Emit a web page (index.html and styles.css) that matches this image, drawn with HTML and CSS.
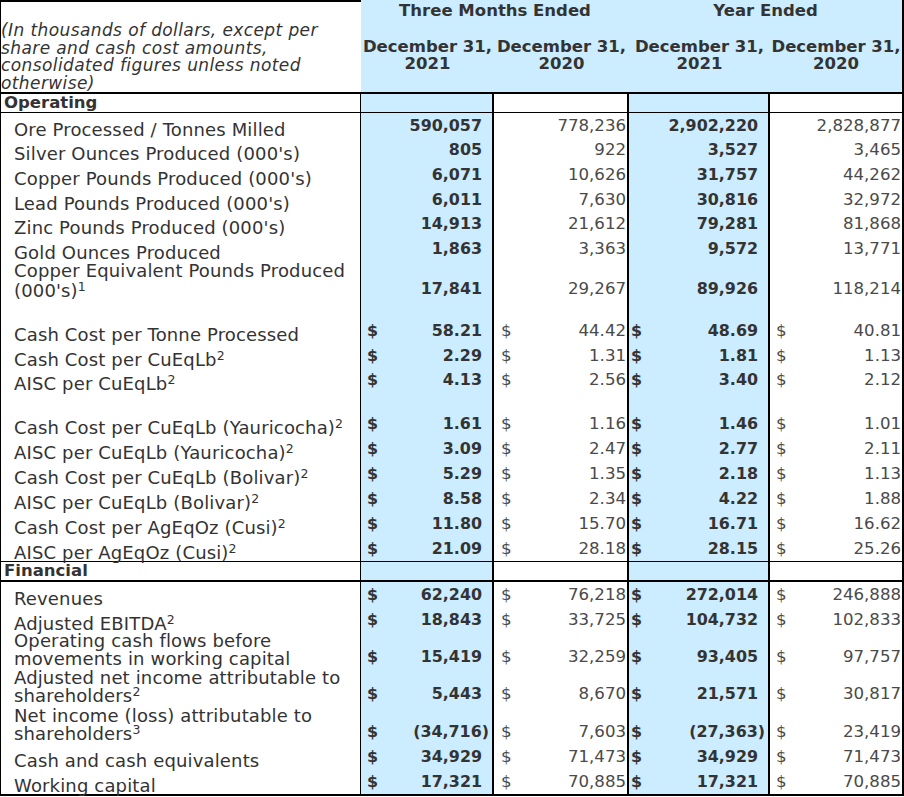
FILE: index.html
```html
<!DOCTYPE html>
<html lang="en">
<head>
<meta charset="utf-8">
<title>Operating and Financial Highlights</title>
<link rel="stylesheet" href="styles.css">
</head>
<body>
<table class="fin">
  <colgroup>
    <col class="c0"><col class="c1"><col class="c2"><col class="c3"><col class="c4">
  </colgroup>
  <thead>
    <tr class="h1">
      <th class="note" rowspan="2">(In thousands of dollars, except per<br>share and cash cost amounts,<br>consolidated figures unless noted<br>otherwise)</th>
      <th class="period" colspan="2">Three Months Ended</th>
      <th class="period last" colspan="2">Year Ended</th>
    </tr>
    <tr class="h2">
      <th class="date">December 31,<br>2021</th>
      <th class="date">December 31,<br>2020</th>
      <th class="date">December 31,<br>2021</th>
      <th class="date last">December 31,<br>2020</th>
    </tr>
  </thead>
  <tbody>
    <tr class="sec op">
      <td class="lbl sechd">Operating</td>
      <td class="v b q1"></td><td class="v w q2"></td><td class="v b q3"></td><td class="v w q4"></td>
    </tr>
    <tr class="r">
      <td class="lbl">Ore Processed / Tonnes Milled</td>
      <td class="v b q1"><div class="amt"><span class="n">590,057</span></div></td>
      <td class="v w q2"><div class="amt"><span class="n">778,236</span></div></td>
      <td class="v b q3"><div class="amt"><span class="n">2,902,220</span></div></td>
      <td class="v w q4"><div class="amt"><span class="n">2,828,877</span></div></td>
    </tr>
    <tr class="r">
      <td class="lbl">Silver Ounces Produced (000's)</td>
      <td class="v b q1"><div class="amt"><span class="n">805</span></div></td>
      <td class="v w q2"><div class="amt"><span class="n">922</span></div></td>
      <td class="v b q3"><div class="amt"><span class="n">3,527</span></div></td>
      <td class="v w q4"><div class="amt"><span class="n">3,465</span></div></td>
    </tr>
    <tr class="r">
      <td class="lbl">Copper Pounds Produced (000's)</td>
      <td class="v b q1"><div class="amt"><span class="n">6,071</span></div></td>
      <td class="v w q2"><div class="amt"><span class="n">10,626</span></div></td>
      <td class="v b q3"><div class="amt"><span class="n">31,757</span></div></td>
      <td class="v w q4"><div class="amt"><span class="n">44,262</span></div></td>
    </tr>
    <tr class="r">
      <td class="lbl">Lead Pounds Produced (000's)</td>
      <td class="v b q1"><div class="amt"><span class="n">6,011</span></div></td>
      <td class="v w q2"><div class="amt"><span class="n">7,630</span></div></td>
      <td class="v b q3"><div class="amt"><span class="n">30,816</span></div></td>
      <td class="v w q4"><div class="amt"><span class="n">32,972</span></div></td>
    </tr>
    <tr class="r">
      <td class="lbl">Zinc Pounds Produced (000's)</td>
      <td class="v b q1"><div class="amt"><span class="n">14,913</span></div></td>
      <td class="v w q2"><div class="amt"><span class="n">21,612</span></div></td>
      <td class="v b q3"><div class="amt"><span class="n">79,281</span></div></td>
      <td class="v w q4"><div class="amt"><span class="n">81,868</span></div></td>
    </tr>
    <tr class="r">
      <td class="lbl">Gold Ounces Produced</td>
      <td class="v b q1"><div class="amt"><span class="n">1,863</span></div></td>
      <td class="v w q2"><div class="amt"><span class="n">3,363</span></div></td>
      <td class="v b q3"><div class="amt"><span class="n">9,572</span></div></td>
      <td class="v w q4"><div class="amt"><span class="n">13,771</span></div></td>
    </tr>
    <tr class="r-cep">
      <td class="lbl lbl-cep">Copper Equivalent Pounds Produced<br>(000's)<sup>1</sup></td>
      <td class="v b q1"><div class="amt"><span class="n">17,841</span></div></td>
      <td class="v w q2"><div class="amt"><span class="n">29,267</span></div></td>
      <td class="v b q3"><div class="amt"><span class="n">89,926</span></div></td>
      <td class="v w q4"><div class="amt"><span class="n">118,214</span></div></td>
    </tr>
    <tr class="gap-a">
      <td class="lbl"></td>
      <td class="v b q1"></td><td class="v w q2"></td><td class="v b q3"></td><td class="v w q4"></td>
    </tr>
    <tr class="r">
      <td class="lbl">Cash Cost per Tonne Processed</td>
      <td class="v b q1"><div class="amt"><span class="cur">$</span><span class="n">58.21</span></div></td>
      <td class="v w q2"><div class="amt"><span class="cur">$</span><span class="n">44.42</span></div></td>
      <td class="v b q3"><div class="amt"><span class="cur">$</span><span class="n">48.69</span></div></td>
      <td class="v w q4"><div class="amt"><span class="cur">$</span><span class="n">40.81</span></div></td>
    </tr>
    <tr class="r">
      <td class="lbl">Cash Cost per CuEqLb<sup>2</sup></td>
      <td class="v b q1"><div class="amt"><span class="cur">$</span><span class="n">2.29</span></div></td>
      <td class="v w q2"><div class="amt"><span class="cur">$</span><span class="n">1.31</span></div></td>
      <td class="v b q3"><div class="amt"><span class="cur">$</span><span class="n">1.81</span></div></td>
      <td class="v w q4"><div class="amt"><span class="cur">$</span><span class="n">1.13</span></div></td>
    </tr>
    <tr class="r">
      <td class="lbl">AISC per CuEqLb<sup>2</sup></td>
      <td class="v b q1"><div class="amt"><span class="cur">$</span><span class="n">4.13</span></div></td>
      <td class="v w q2"><div class="amt"><span class="cur">$</span><span class="n">2.56</span></div></td>
      <td class="v b q3"><div class="amt"><span class="cur">$</span><span class="n">3.40</span></div></td>
      <td class="v w q4"><div class="amt"><span class="cur">$</span><span class="n">2.12</span></div></td>
    </tr>
    <tr class="gap-b">
      <td class="lbl"></td>
      <td class="v b q1"></td><td class="v w q2"></td><td class="v b q3"></td><td class="v w q4"></td>
    </tr>
    <tr class="r25">
      <td class="lbl">Cash Cost per CuEqLb (Yauricocha)<sup>2</sup></td>
      <td class="v b q1"><div class="amt"><span class="cur">$</span><span class="n">1.61</span></div></td>
      <td class="v w q2"><div class="amt"><span class="cur">$</span><span class="n">1.16</span></div></td>
      <td class="v b q3"><div class="amt"><span class="cur">$</span><span class="n">1.46</span></div></td>
      <td class="v w q4"><div class="amt"><span class="cur">$</span><span class="n">1.01</span></div></td>
    </tr>
    <tr class="r25">
      <td class="lbl">AISC per CuEqLb (Yauricocha)<sup>2</sup></td>
      <td class="v b q1"><div class="amt"><span class="cur">$</span><span class="n">3.09</span></div></td>
      <td class="v w q2"><div class="amt"><span class="cur">$</span><span class="n">2.47</span></div></td>
      <td class="v b q3"><div class="amt"><span class="cur">$</span><span class="n">2.77</span></div></td>
      <td class="v w q4"><div class="amt"><span class="cur">$</span><span class="n">2.11</span></div></td>
    </tr>
    <tr class="r25">
      <td class="lbl">Cash Cost per CuEqLb (Bolivar)<sup>2</sup></td>
      <td class="v b q1"><div class="amt"><span class="cur">$</span><span class="n">5.29</span></div></td>
      <td class="v w q2"><div class="amt"><span class="cur">$</span><span class="n">1.35</span></div></td>
      <td class="v b q3"><div class="amt"><span class="cur">$</span><span class="n">2.18</span></div></td>
      <td class="v w q4"><div class="amt"><span class="cur">$</span><span class="n">1.13</span></div></td>
    </tr>
    <tr class="r25">
      <td class="lbl">AISC per CuEqLb (Bolivar)<sup>2</sup></td>
      <td class="v b q1"><div class="amt"><span class="cur">$</span><span class="n">8.58</span></div></td>
      <td class="v w q2"><div class="amt"><span class="cur">$</span><span class="n">2.34</span></div></td>
      <td class="v b q3"><div class="amt"><span class="cur">$</span><span class="n">4.22</span></div></td>
      <td class="v w q4"><div class="amt"><span class="cur">$</span><span class="n">1.88</span></div></td>
    </tr>
    <tr class="r25">
      <td class="lbl">Cash Cost per AgEqOz (Cusi)<sup>2</sup></td>
      <td class="v b q1"><div class="amt"><span class="cur">$</span><span class="n">11.80</span></div></td>
      <td class="v w q2"><div class="amt"><span class="cur">$</span><span class="n">15.70</span></div></td>
      <td class="v b q3"><div class="amt"><span class="cur">$</span><span class="n">16.71</span></div></td>
      <td class="v w q4"><div class="amt"><span class="cur">$</span><span class="n">16.62</span></div></td>
    </tr>
    <tr class="r25">
      <td class="lbl">AISC per AgEqOz (Cusi)<sup>2</sup></td>
      <td class="v b q1"><div class="amt"><span class="cur">$</span><span class="n">21.09</span></div></td>
      <td class="v w q2"><div class="amt"><span class="cur">$</span><span class="n">28.18</span></div></td>
      <td class="v b q3"><div class="amt"><span class="cur">$</span><span class="n">28.15</span></div></td>
      <td class="v w q4"><div class="amt"><span class="cur">$</span><span class="n">25.26</span></div></td>
    </tr>
    <tr class="sec finhd">
      <td class="lbl sechd">Financial</td>
      <td class="v b q1"></td><td class="v w q2"></td><td class="v b q3"></td><td class="v w q4"></td>
    </tr>
    <tr class="r">
      <td class="lbl">Revenues</td>
      <td class="v b q1"><div class="amt"><span class="cur">$</span><span class="n">62,240</span></div></td>
      <td class="v w q2"><div class="amt"><span class="cur">$</span><span class="n">76,218</span></div></td>
      <td class="v b q3"><div class="amt"><span class="cur">$</span><span class="n">272,014</span></div></td>
      <td class="v w q4"><div class="amt"><span class="cur">$</span><span class="n">246,888</span></div></td>
    </tr>
    <tr class="r">
      <td class="lbl">Adjusted EBITDA<sup>2</sup></td>
      <td class="v b q1"><div class="amt"><span class="cur">$</span><span class="n">18,843</span></div></td>
      <td class="v w q2"><div class="amt"><span class="cur">$</span><span class="n">33,725</span></div></td>
      <td class="v b q3"><div class="amt"><span class="cur">$</span><span class="n">104,732</span></div></td>
      <td class="v w q4"><div class="amt"><span class="cur">$</span><span class="n">102,833</span></div></td>
    </tr>
    <tr class="r37">
      <td class="lbl lbl2">Operating cash flows before<br>movements in working capital</td>
      <td class="v b q1"><div class="amt"><span class="cur">$</span><span class="n">15,419</span></div></td>
      <td class="v w q2"><div class="amt"><span class="cur">$</span><span class="n">32,259</span></div></td>
      <td class="v b q3"><div class="amt"><span class="cur">$</span><span class="n">93,405</span></div></td>
      <td class="v w q4"><div class="amt"><span class="cur">$</span><span class="n">97,757</span></div></td>
    </tr>
    <tr class="r37">
      <td class="lbl lbl2">Adjusted net income attributable to<br>shareholders<sup>2</sup></td>
      <td class="v b q1"><div class="amt"><span class="cur">$</span><span class="n">5,443</span></div></td>
      <td class="v w q2"><div class="amt"><span class="cur">$</span><span class="n">8,670</span></div></td>
      <td class="v b q3"><div class="amt"><span class="cur">$</span><span class="n">21,571</span></div></td>
      <td class="v w q4"><div class="amt"><span class="cur">$</span><span class="n">30,817</span></div></td>
    </tr>
    <tr class="r38">
      <td class="lbl lbl2">Net income (loss) attributable to<br>shareholders<sup>3</sup></td>
      <td class="v b q1"><div class="amt"><span class="cur">$</span><span class="n neg">(34,716)</span></div></td>
      <td class="v w q2"><div class="amt"><span class="cur">$</span><span class="n">7,603</span></div></td>
      <td class="v b q3"><div class="amt"><span class="cur">$</span><span class="n neg">(27,363)</span></div></td>
      <td class="v w q4"><div class="amt"><span class="cur">$</span><span class="n">23,419</span></div></td>
    </tr>
    <tr class="r25">
      <td class="lbl">Cash and cash equivalents</td>
      <td class="v b q1"><div class="amt"><span class="cur">$</span><span class="n">34,929</span></div></td>
      <td class="v w q2"><div class="amt"><span class="cur">$</span><span class="n">71,473</span></div></td>
      <td class="v b q3"><div class="amt"><span class="cur">$</span><span class="n">34,929</span></div></td>
      <td class="v w q4"><div class="amt"><span class="cur">$</span><span class="n">71,473</span></div></td>
    </tr>
    <tr class="r-last">
      <td class="lbl">Working capital</td>
      <td class="v b q1"><div class="amt"><span class="cur">$</span><span class="n">17,321</span></div></td>
      <td class="v w q2"><div class="amt"><span class="cur">$</span><span class="n">70,885</span></div></td>
      <td class="v b q3"><div class="amt"><span class="cur">$</span><span class="n">17,321</span></div></td>
      <td class="v w q4"><div class="amt"><span class="cur">$</span><span class="n">70,885</span></div></td>
    </tr>
  </tbody>
</table>
</body>
</html>
```

FILE: styles.css
```css
* { box-sizing: border-box; }

html, body {
  margin: 0;
  padding: 0;
  background: #ffffff;
}

body {
  font-family: "DejaVu Sans", "Noto Sans", sans-serif;
  color: #333333;
}

.fin {
  width: 904px;
  table-layout: fixed;
  border-collapse: separate;
  border-spacing: 0;
}

.c0 { width: 361px; }
.c1 { width: 133px; }
.c2 { width: 135px; }
.c3 { width: 141px; }
.c4 { width: 134px; }

.fin th,
.fin td {
  padding: 0;
  font-weight: normal;
}

/* ---------- header ---------- */
.h1 { height: 30px; }
.h2 { height: 64px; }

.note {
  border-top: 2px solid #000;
  border-left: 1px solid #000;
  border-bottom: 2px solid #000;
  vertical-align: bottom;
  text-align: left;
  font-style: italic;
  font-size: 17px;
  letter-spacing: 0.4px;
  line-height: 17.4px;
  padding: 0 0 3px 2px;
  color: #333;
  white-space: nowrap;
}

.period {
  background: #ccecff;
  font-weight: bold !important;
  font-size: 16.5px;
  line-height: 18px;
  vertical-align: top;
  text-align: center;
  padding-top: 2px !important;
  white-space: nowrap;
}

.date {
  background: #ccecff;
  font-weight: bold !important;
  font-size: 16.5px;
  line-height: 17px;
  vertical-align: top;
  text-align: center;
  padding-top: 8px !important;
  border-bottom: 2px solid #000;
  white-space: nowrap;
}

.last { border-right: 2px solid #000; }

/* ---------- body rows ---------- */
.r { height: 24.7px; }
.r25 { height: 25px; }
.r-cep { height: 40px; }
.gap-a { height: 17px; }
.gap-b { height: 19px; }
.r37 { height: 37px; }
.r38 { height: 38px; }
.r-last { height: 27px; }
.op { height: 19px; }
.finhd { height: 21px; }

.op td { border-bottom: 1px solid #000; }
.finhd td { border-top: 1px solid #000; border-bottom: 2px solid #000; }
.r-last td { border-bottom: 2px solid #000; }

.lbl {
  border-left: 1px solid #000;
  border-right: 1px solid #000;
  vertical-align: bottom;
  font-size: 18px;
  letter-spacing: 0.15px;
  line-height: 17px;
  padding-left: 13px !important;
  white-space: nowrap;
  color: #333;
}

.lbl-cep { line-height: 20px; }
.lbl2 { line-height: 18.5px; }

.sechd {
  font-weight: bold !important;
  font-size: 16.5px;
  letter-spacing: 0;
  line-height: 18px;
  padding-left: 3px !important;
  vertical-align: middle;
}

.v {
  border-right: 2px solid #000;
  vertical-align: bottom;
  line-height: 19px;
  padding-bottom: 3px !important;
  white-space: nowrap;
}

.b {
  background: #ccecff;
  font-weight: bold !important;
  font-size: 15.9px;
  color: #333;
}

.w {
  background: #ffffff;
  font-weight: normal;
  font-size: 16.6px;
  color: #4a4a4a;
}

.q1 { padding-left: 6px !important; padding-right: 10px !important; }
.q2 { padding-left: 7px !important; padding-right: 1px !important; }
.q3 { padding-left: 2px !important; padding-right: 10px !important; }
.q4 { padding-left: 6px !important; padding-right: 1px !important; }

.amt {
  display: flex;
  align-items: baseline;
}

.n { margin-left: auto; }
.neg { margin-right: -7px; }

sup {
  font-size: 12.5px;
  line-height: 0;
  vertical-align: 6px;
}
```
